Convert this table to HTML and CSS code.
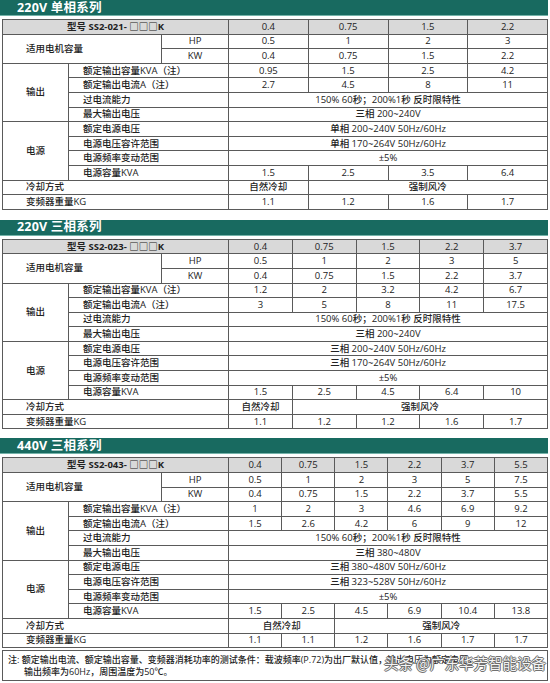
FILE: index.html
```html
<!DOCTYPE html>
<html lang="zh-CN">
<head>
<meta charset="utf-8">
<title>SS2 系列规格</title>
<link rel="stylesheet" href="styles.css">
</head>
<body>
<div class="page">

<section class="series">
  <div class="bar"><span class="bar-title">220V 单相系列</span></div>
  <table class="spec n4">
    <colgroup><col class="c-grp"><col class="c-lbl"><col class="c-sub"><col><col><col><col></colgroup>
    <tr class="head"><td colspan="3" class="model">型号 SS2-021- □□□K</td><td>0.4</td><td>0.75</td><td>1.5</td><td>2.2</td></tr>
    <tr><td colspan="2" rowspan="2" class="lbl-wide">适用电机容量</td><td>HP</td><td>0.5</td><td>1</td><td>2</td><td>3</td></tr>
    <tr><td>KW</td><td>0.4</td><td>0.75</td><td>1.5</td><td>2.2</td></tr>
    <tr><td rowspan="4">输出</td><td colspan="2" class="lbl">额定输出容量KVA（注）</td><td>0.95</td><td>1.5</td><td>2.5</td><td>4.2</td></tr>
    <tr><td colspan="2" class="lbl">额定输出电流A（注）</td><td>2.7</td><td>4.5</td><td>8</td><td>11</td></tr>
    <tr><td colspan="2" class="lbl">过电流能力</td><td colspan="4">150% 60秒；200%1秒 反时限特性</td></tr>
    <tr><td colspan="2" class="lbl">最大输出电压</td><td colspan="4">三相 200~240V</td></tr>
    <tr><td rowspan="4">电源</td><td colspan="2" class="lbl">额定电源电压</td><td colspan="4">单相 200~240V 50Hz/60Hz</td></tr>
    <tr><td colspan="2" class="lbl">电源电压容许范围</td><td colspan="4">单相 170~264V 50Hz/60Hz</td></tr>
    <tr><td colspan="2" class="lbl">电源频率变动范围</td><td colspan="4">±5%</td></tr>
    <tr><td colspan="2" class="lbl">电源容量KVA</td><td>1.5</td><td>2.5</td><td>3.5</td><td>6.4</td></tr>
    <tr><td colspan="3" class="lbl-wide">冷却方式</td><td>自然冷却</td><td colspan="3">强制风冷</td></tr>
    <tr><td colspan="3" class="lbl-wide">变频器重量KG</td><td>1.1</td><td>1.2</td><td>1.6</td><td>1.7</td></tr>
  </table>
</section>

<section class="series">
  <div class="bar"><span class="bar-title">220V 三相系列</span></div>
  <table class="spec n5">
    <colgroup><col class="c-grp"><col class="c-lbl"><col class="c-sub"><col><col><col><col><col></colgroup>
    <tr class="head"><td colspan="3" class="model">型号 SS2-023- □□□K</td><td>0.4</td><td>0.75</td><td>1.5</td><td>2.2</td><td>3.7</td></tr>
    <tr><td colspan="2" rowspan="2" class="lbl-wide">适用电机容量</td><td>HP</td><td>0.5</td><td>1</td><td>2</td><td>3</td><td>5</td></tr>
    <tr><td>KW</td><td>0.4</td><td>0.75</td><td>1.5</td><td>2.2</td><td>3.7</td></tr>
    <tr><td rowspan="4">输出</td><td colspan="2" class="lbl">额定输出容量KVA（注）</td><td>1.2</td><td>2</td><td>3.2</td><td>4.2</td><td>6.7</td></tr>
    <tr><td colspan="2" class="lbl">额定输出电流A（注）</td><td>3</td><td>5</td><td>8</td><td>11</td><td>17.5</td></tr>
    <tr><td colspan="2" class="lbl">过电流能力</td><td colspan="5">150% 60秒；200%1秒 反时限特性</td></tr>
    <tr><td colspan="2" class="lbl">最大输出电压</td><td colspan="5">三相 200~240V</td></tr>
    <tr><td rowspan="4">电源</td><td colspan="2" class="lbl">额定电源电压</td><td colspan="5">三相 200~240V 50Hz/60Hz</td></tr>
    <tr><td colspan="2" class="lbl">电源电压容许范围</td><td colspan="5">三相 170~264V 50Hz/60Hz</td></tr>
    <tr><td colspan="2" class="lbl">电源频率变动范围</td><td colspan="5">±5%</td></tr>
    <tr><td colspan="2" class="lbl">电源容量KVA</td><td>1.5</td><td>2.5</td><td>4.5</td><td>6.4</td><td>10</td></tr>
    <tr><td colspan="3" class="lbl-wide">冷却方式</td><td>自然冷却</td><td colspan="4">强制风冷</td></tr>
    <tr><td colspan="3" class="lbl-wide">变频器重量KG</td><td>1.1</td><td>1.2</td><td>1.2</td><td>1.6</td><td>1.7</td></tr>
  </table>
</section>

<section class="series last">
  <div class="bar"><span class="bar-title">440V 三相系列</span></div>
  <table class="spec n6">
    <colgroup><col class="c-grp"><col class="c-lbl"><col class="c-sub"><col><col><col><col><col><col></colgroup>
    <tr class="head"><td colspan="3" class="model">型号 SS2-043- □□□K</td><td>0.4</td><td>0.75</td><td>1.5</td><td>2.2</td><td>3.7</td><td>5.5</td></tr>
    <tr><td colspan="2" rowspan="2" class="lbl-wide">适用电机容量</td><td>HP</td><td>0.5</td><td>1</td><td>2</td><td>3</td><td>5</td><td>7.5</td></tr>
    <tr><td>KW</td><td>0.4</td><td>0.75</td><td>1.5</td><td>2.2</td><td>3.7</td><td>5.5</td></tr>
    <tr><td rowspan="4">输出</td><td colspan="2" class="lbl">额定输出容量KVA（注）</td><td>1</td><td>2</td><td>3</td><td>4.6</td><td>6.9</td><td>9.2</td></tr>
    <tr><td colspan="2" class="lbl">额定输出电流A（注）</td><td>1.5</td><td>2.6</td><td>4.2</td><td>6</td><td>9</td><td>12</td></tr>
    <tr><td colspan="2" class="lbl">过电流能力</td><td colspan="6">150% 60秒；200%1秒 反时限特性</td></tr>
    <tr><td colspan="2" class="lbl">最大输出电压</td><td colspan="6">三相 380~480V</td></tr>
    <tr><td rowspan="4">电源</td><td colspan="2" class="lbl">额定电源电压</td><td colspan="6">三相 380~480V 50Hz/60Hz</td></tr>
    <tr><td colspan="2" class="lbl">电源电压容许范围</td><td colspan="6">三相 323~528V 50Hz/60Hz</td></tr>
    <tr><td colspan="2" class="lbl">电源频率变动范围</td><td colspan="6">±5%</td></tr>
    <tr><td colspan="2" class="lbl">电源容量KVA</td><td>1.5</td><td>2.5</td><td>4.5</td><td>6.9</td><td>10.4</td><td>13.8</td></tr>
    <tr><td colspan="3" class="lbl-wide">冷却方式</td><td colspan="2">自然冷却</td><td colspan="4">强制风冷</td></tr>
    <tr><td colspan="3" class="lbl-wide">变频器重量KG</td><td>1.1</td><td>1.1</td><td>1.2</td><td>1.6</td><td>1.7</td><td>1.7</td></tr>
  </table>
</section>

<div class="note">
  <p class="note-line">注: 额定输出电流、额定输出容量、变频器消耗功率的测试条件：载波频率(P.72)为出厂默认值，输出电压为额定电压，</p>
  <p class="note-line indent">输出频率为60Hz，周围温度为50℃。</p>
  <span class="watermark">头条 @广东华芳智能设备</span>
</div>

</div>
</body>
</html>
```

FILE: styles.css
```css
* { box-sizing: border-box; }

html, body {
  margin: 0;
  padding: 0;
  background: #ffffff;
}

body {
  font-family: "Open Sans", "Noto Sans CJK SC", sans-serif;
  color: #222222;
  font-size: 9.5px;
  font-weight: 500;
}

.page {
  width: 550px;
  display: flex;
  flex-direction: column;
}

.series {
  display: flex;
  flex-direction: column;
  gap: 3px;
  margin-bottom: 10px;
}

.series:nth-of-type(2) {
  margin-bottom: 9px;
}

.series.last {
  margin-bottom: 0;
}

.bar {
  width: 548px;
  height: 16px;
  background: #186a60;
  border-bottom: 1px solid #74b3a9;
  display: flex;
  align-items: center;
  padding-left: 17px;
}

.bar-title {
  font-family: "Open Sans", "Noto Sans CJK SC", sans-serif;
  color: #ffffff;
  font-weight: 700;
  font-size: 12.5px;
  line-height: 14px;
  letter-spacing: 0.2px;
}

.spec {
  width: 546px;
  margin-left: 2px;
  border-collapse: collapse;
  table-layout: fixed;
  border: 1px solid #4a4a4a;
}

.c-grp { width: 66px; }
.c-lbl { width: 93px; }
.c-sub { width: 67px; }

.spec tr {
  height: 14.6px;
}

.spec td {
  border: 1px solid #5a5a5a;
  padding: 0;
  text-align: center;
  vertical-align: middle;
  font-size: 9.5px;
  line-height: 12px;
  white-space: nowrap;
  overflow: hidden;
}

.spec .head td {
  background: #d9d9d9;
}

.spec td.model {
  font-weight: 700;
}

.spec td.lbl {
  text-align: left;
  padding-left: 14px;
}

.spec td.lbl-wide {
  text-align: left;
  padding-left: 23px;
}

.note {
  position: relative;
  width: 546px;
  margin-left: 2px;
  margin-top: 2px;
  height: 31px;
  border: 1px solid #5a5a5a;
  padding: 3px 0 0 5px;
  overflow: hidden;
}

.note-line {
  margin: 0;
  font-size: 9px;
  line-height: 12px;
  white-space: nowrap;
}

.note-line.indent {
  padding-left: 16px;
}

.watermark {
  position: absolute;
  left: 381px;
  top: 4px;
  font-family: "Noto Sans CJK SC", sans-serif;
  font-weight: 400;
  font-size: 14.5px;
  line-height: 16px;
  color: #f4f4f4;
  white-space: nowrap;
  text-shadow:
    0 0 1px #444,
    1px 0 0 #777,
    -1px 0 0 #777,
    0 1px 0 #777,
    0 -1px 0 #777;
}
```
